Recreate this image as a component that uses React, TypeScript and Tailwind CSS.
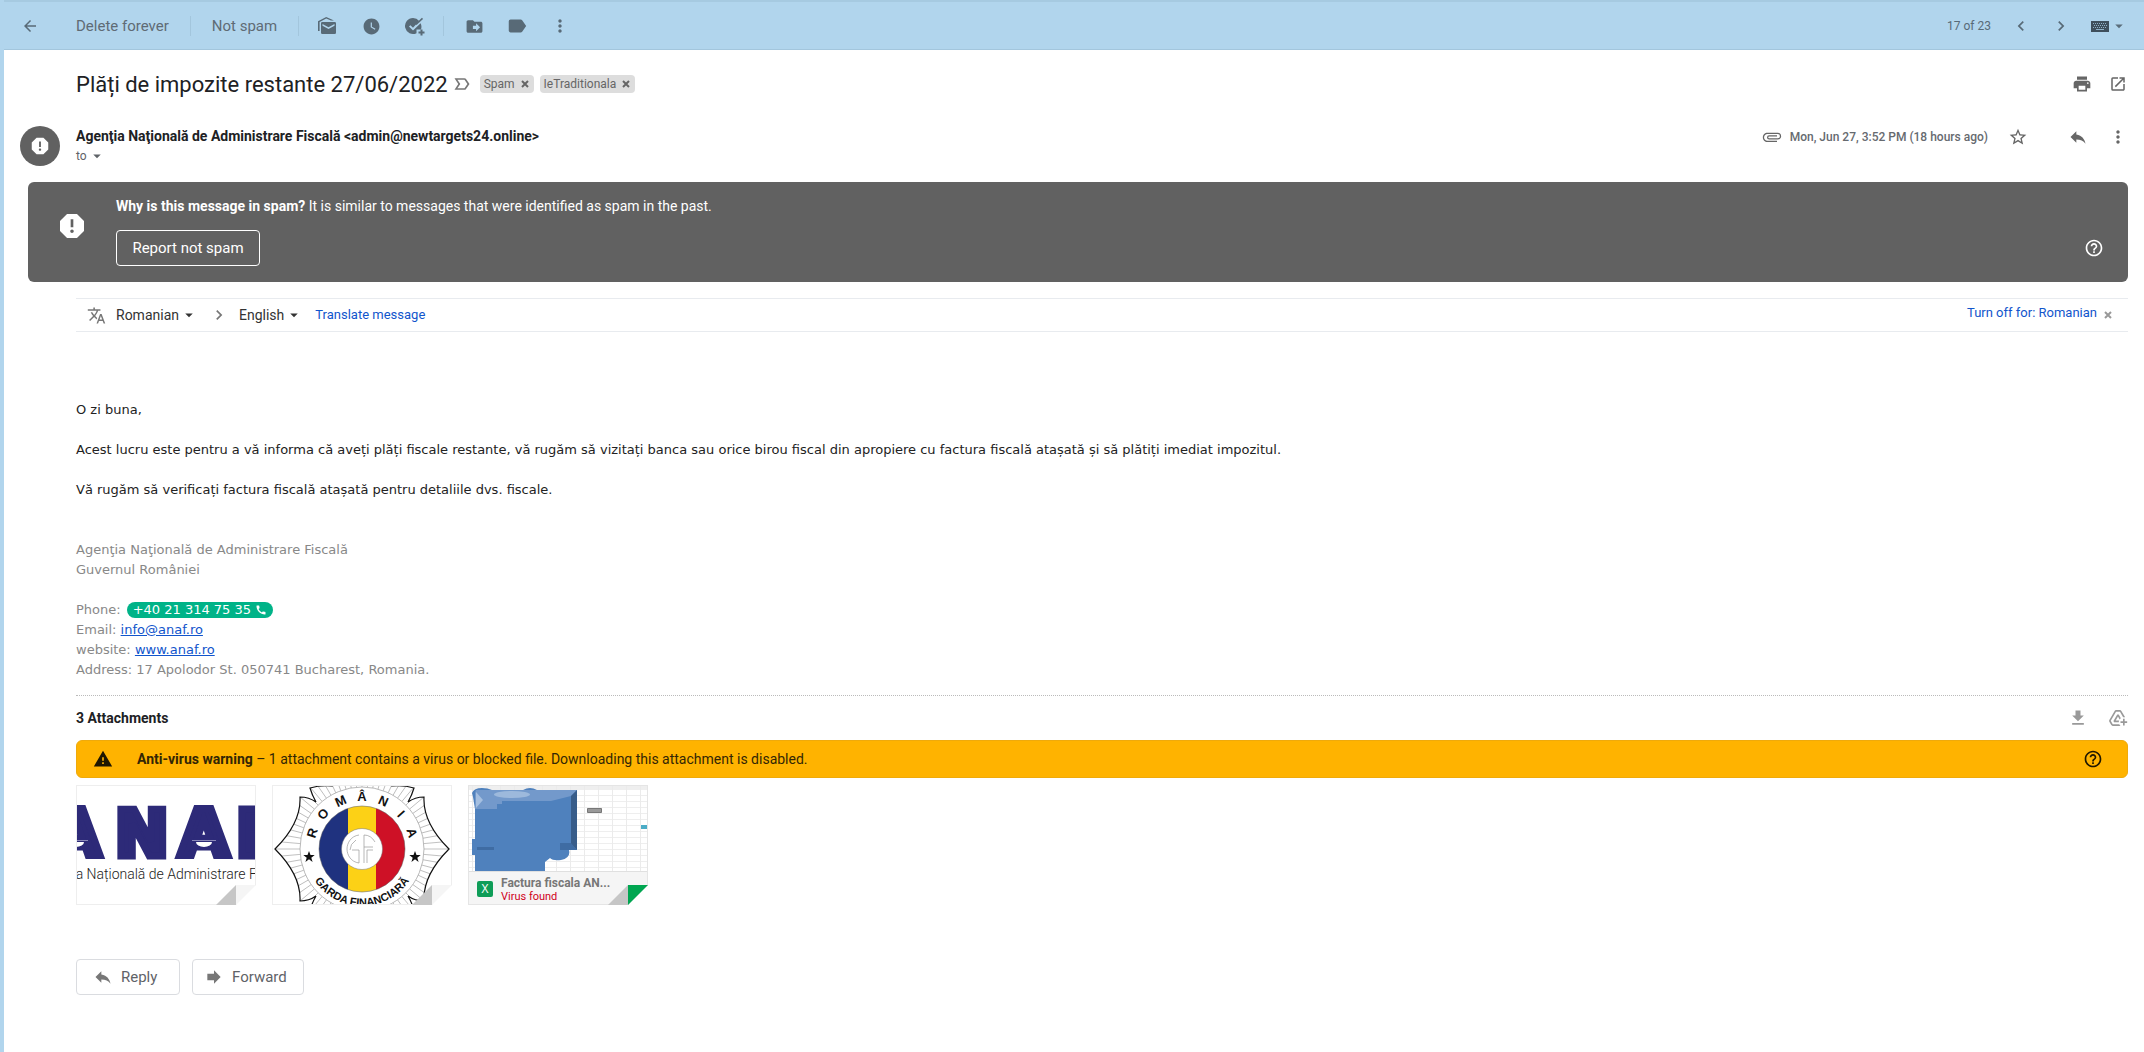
import type { ReactNode } from "react";
import {
  MdAddToDrive,
  MdArrowBack,
  MdArrowDropDown,
  MdAttachFile,
  MdCall,
  MdChevronLeft,
  MdChevronRight,
  MdDriveFileMove,
  MdFileDownload,
  MdForward,
  MdHelpOutline,
  MdLabel,
  MdLabelImportantOutline,
  MdMoreVert,
  MdOpenInNew,
  MdPrint,
  MdReply,
  MdReport,
  MdStarBorder,
  MdTranslate,
  MdWarning,
  MdWatchLater,
} from "react-icons/md";

function IconButton({ label, children }: { label: string; children: ReactNode }) {
  return (
    <button type="button" aria-label={label} className="flex size-5 shrink-0 items-center justify-center">
      {children}
    </button>
  );
}

function Divider() {
  return <span className="h-5 w-px bg-[#a3c6dd]" />;
}

function CrossIcon() {
  return (
    <svg viewBox="0 0 8 8" className="size-2" aria-hidden="true">
      <path stroke="currentColor" strokeWidth="2" d="M1 1 7 7M7 1 1 7" />
    </svg>
  );
}

function KeyboardIcon() {
  return (
    <svg viewBox="0 0 18 11" className="h-[11px] w-[18px]" aria-hidden="true">
      <path fill="currentColor" d="M0 0h18v11H0z" />
      <path stroke="#8fb0c6" strokeDasharray="1 1" d="M2 2.500h14M3 4.500h13M2 6.500h14" />
      <path stroke="#8fb0c6" d="M5 8.500h8" />
    </svg>
  );
}

function MarkUnreadIcon() {
  return (
    <svg viewBox="0 0 20 20" className="size-5" fill="currentColor" aria-hidden="true">
      <path d="M1 15V5.200L9.200 1 17 4.600H14L9.200 2.600 2.600 5.900V15z" />
      <path
        fillRule="evenodd"
        d="M5.300 6H17.700A1.300 1.300 0 0 1 19 7.300V16.700A1.300 1.300 0 0 1 17.700 18H5.300A1.300 1.300 0 0 1 4 16.700V7.300A1.300 1.300 0 0 1 5.300 6zM5.500 8V9.700L11.500 13 17.500 9.700V8L11.500 11.300z"
      />
    </svg>
  );
}

function AddTaskIcon() {
  return (
    <svg viewBox="0 0 22 22" className="size-[22px] shrink-0" aria-hidden="true">
      <path
        fill="currentColor"
        d="M9 3a8 8 0 1 0 3.500 15.200V14.500H17A8 8 0 0 0 16.600 8.300L9 15.600 5 11.600 6.400 10.200 9 12.700 15.200 6A8 8 0 0 0 9 3z"
      />
      <path stroke="currentColor" strokeWidth="1.600" fill="none" d="M12 9.500 18.500 3.400" />
      <path stroke="currentColor" strokeWidth="2" d="M17.500 14.500v6M14.500 17.500h6" />
    </svg>
  );
}

function Toolbar() {
  return (
    <header className="flex h-[50px] items-center border-b border-[#a3c6dd] bg-[#b1d5ed] pt-[3px] pr-4 text-[#586a77] shadow-[inset_0_2px_0_#a6cae1]">
      <div className="flex flex-1 items-center">
        <div className="flex w-[72px] pl-4">
          <IconButton label="Back to Spam">
            <MdArrowBack className="size-[18px]" />
          </IconButton>
        </div>
        <div className="flex items-center gap-[21px] text-[15px] text-[#5f6b75]">
          <button type="button">Delete forever</button>
          <Divider />
          <button type="button">Not spam</button>
          <Divider />
        </div>
        <div className="flex items-center gap-6 pl-[18px]">
          <IconButton label="Mark as unread">
            <MarkUnreadIcon />
          </IconButton>
          <IconButton label="Snooze">
            <MdWatchLater className="size-[19px]" />
          </IconButton>
          <IconButton label="Add to Tasks">
            <AddTaskIcon />
          </IconButton>
        </div>
        <div className="flex items-center pl-[18px]">
          <Divider />
        </div>
        <div className="flex items-center gap-[23px] pl-5">
          <IconButton label="Move to">
            <MdDriveFileMove className="size-[19px]" />
          </IconButton>
          <IconButton label="Labels">
            <MdLabel className="size-[22px] shrink-0" />
          </IconButton>
          <IconButton label="More">
            <MdMoreVert className="size-5" />
          </IconButton>
        </div>
      </div>
      <div className="flex items-center gap-5">
        <span className="text-xs">17 of 23</span>
        <IconButton label="Newer">
          <MdChevronLeft className="size-5" />
        </IconButton>
        <IconButton label="Older">
          <MdChevronRight className="size-5" />
        </IconButton>
        <button type="button" aria-label="Input tools" className="flex items-center gap-px text-[#3f4f5c]">
          <KeyboardIcon />
          <MdArrowDropDown className="size-[18px] text-[#5a6d7b]" />
        </button>
      </div>
    </header>
  );
}

function LabelChip({ name }: { name: string }) {
  return (
    <span className="flex h-[18px] items-center gap-1.5 rounded bg-[#ddd] pr-[5px] pl-1 text-xs text-[#666]">
      {name}
      <button type="button" aria-label={`Remove label ${name}`}>
        <CrossIcon />
      </button>
    </span>
  );
}

function SubjectRow() {
  return (
    <div className="flex h-[68px] items-center pr-4 pl-[72px]">
      <div className="flex flex-1 items-center">
        <h1 className="text-[22px] text-[#202124]">Plăți de impozite restante 27/06/2022</h1>
        <button type="button" aria-label="Mark as important" className="pr-2 pl-1 text-[#777]">
          <MdLabelImportantOutline className="size-5" />
        </button>
        <div className="flex items-center gap-1.5">
          <LabelChip name="Spam" />
          <LabelChip name="IeTraditionala" />
        </div>
      </div>
      <div className="flex items-center gap-4 text-[#666]">
        <IconButton label="Print all">
          <MdPrint className="size-5" />
        </IconButton>
        <IconButton label="In new window">
          <MdOpenInNew className="size-[18px]" />
        </IconButton>
      </div>
    </div>
  );
}

function SenderRow() {
  return (
    <div className="flex pt-2 pr-4 pl-4">
      <div className="flex size-10 items-center justify-center rounded-full bg-[#616161] text-white">
        <MdReport className="size-[22px]" />
      </div>
      <div className="flex-1 pl-4">
        <p className="text-sm font-bold text-[#202124]">
          Agenţia Naţională de Administrare Fiscală &lt;admin@newtargets24.online&gt;
        </p>
        <button type="button" className="flex items-center text-xs leading-5 text-[#5f6368]">
          to
          <MdArrowDropDown className="ml-px size-[18px]" />
        </button>
      </div>
      <div className="flex h-[22px] items-center text-[#666]">
        <MdAttachFile className="size-5 rotate-90" />
        <span className="pl-2 text-xs font-medium text-[#666a6f]">Mon, Jun 27, 3:52 PM (18 hours ago)</span>
        <div className="flex items-center pl-5">
          <IconButton label="Not starred">
            <MdStarBorder className="size-5" />
          </IconButton>
        </div>
        <div className="flex items-center gap-5 pl-10">
          <IconButton label="Reply">
            <MdReply className="size-5" />
          </IconButton>
          <IconButton label="More">
            <MdMoreVert className="size-5" />
          </IconButton>
        </div>
      </div>
    </div>
  );
}

function SpamBanner() {
  return (
    <section className="mt-4 mr-4 ml-6 flex h-[100px] rounded-md bg-[#616161] text-white">
      <div className="w-[88px] pt-7 pl-7">
        <MdReport className="size-8" />
      </div>
      <div className="flex-1 pt-3.5">
        <p className="text-sm">
          <b>Why is this message in spam?</b> It is similar to messages that were identified as spam in the past.
        </p>
        <button type="button" className="mt-3.5 h-9 w-36 rounded border border-white text-[15px]">
          Report not spam
        </button>
      </div>
      <div className="pt-14 pr-6">
        <IconButton label="Help">
          <MdHelpOutline className="size-5" />
        </IconButton>
      </div>
    </section>
  );
}

function LanguagePicker({ value, label }: { value: string; label: string }) {
  return (
    <button type="button" aria-label={label} className="flex items-center gap-px text-sm text-[#333]">
      {value}
      <MdArrowDropDown className="size-[18px]" />
    </button>
  );
}

function TranslateBar() {
  return (
    <section className="mt-4 mr-4 ml-[72px] flex h-[34px] items-center border-y border-[#e8ebef]">
      <div className="flex flex-1 items-center">
        <div className="w-10 pl-[11px] text-[#777]">
          <MdTranslate className="size-[19px]" />
        </div>
        <LanguagePicker value="Romanian" label="Source language" />
        <MdChevronRight className="mr-2.5 ml-[11px] size-5 text-[#777]" />
        <LanguagePicker value="English" label="Target language" />
        <a href="#translate" className="ml-3 text-[13px] text-[#1155cc]">
          Translate message
        </a>
      </div>
      <div className="flex items-center pr-4">
        <a href="#turn-off" className="pb-1 text-[13px] text-[#1155cc]">
          Turn off for: Romanian
        </a>
        <button type="button" aria-label="Close" className="ml-[7px] text-[#999]">
          <CrossIcon />
        </button>
      </div>
    </section>
  );
}

function MessageBody() {
  return (
    <article className="mt-[68px] mr-4 ml-[72px] font-['DejaVu_Sans',Verdana,sans-serif] text-[13px] leading-5 text-[#222]">
      <p>O zi buna,</p>
      <p className="mt-5">
        Acest lucru este pentru a vă informa că aveți plăți fiscale restante, vă rugăm să vizitați banca sau orice birou
        fiscal din apropiere cu factura fiscală atașată și să plătiți imediat impozitul.
      </p>
      <p className="mt-5">Vă rugăm să verificați factura fiscală atașată pentru detaliile dvs. fiscale.</p>
      <div className="mt-10 text-[#888]">
        <p>Agenţia Naţională de Administrare Fiscală</p>
        <p>Guvernul României</p>
        <p className="mt-5 flex items-center">
          Phone:
          <a
            href="tel:+40213147535"
            className="ml-1.5 flex h-4 items-center gap-1 rounded-full bg-[#00b388] px-1.5 text-white"
          >
            +40 21 314 75 35
            <MdCall className="size-3" />
          </a>
        </p>
        <p>
          Email:{" "}
          <a href="mailto:info@anaf.ro" className="text-[#1155cc] underline">
            info@anaf.ro
          </a>
        </p>
        <p>
          website:{" "}
          <a href="#anaf" className="text-[#1155cc] underline">
            www.anaf.ro
          </a>
        </p>
        <p>Address: 17 Apolodor St. 050741 Bucharest, Romania.</p>
      </div>
    </article>
  );
}

function Fold({ corner }: { corner: string }) {
  return (
    <svg viewBox="0 0 40 20" className="absolute right-0 bottom-0 h-5 w-10" aria-hidden="true">
      <path fill="#fff" d="M40 0V20H20z" />
      <path fill="#c6c6c6" d="M0 20 20 0V20z" />
      <path fill={corner} d="M20 20V0H40z" />
    </svg>
  );
}

function AnafThumb() {
  return (
    <svg viewBox="0 0 180 120" className="h-[120px] w-[180px]" role="img" aria-label="ANAF logo">
      <text
        x="-25 39 103 160"
        y="71"
        fontFamily="DejaVu Sans"
        fontWeight="700"
        fontSize="64"
        fill="#2d2a78"
        stroke="#2d2a78"
        strokeWidth="7"
      >
        ANAF
      </text>
      <path fill="#fff" d="M120 57h16a8 5 0 0 1-16 0zM-8 57h16a8 5 0 0 1-16 0z" />
      <path stroke="#8a88b8" d="M116 55.500h24M-10 55.500h22" />
      <text x="-8" y="94" fontFamily="Roboto" fontWeight="300" fontSize="14" fill="#222">
        ția Națională de Administrare F
      </text>
    </svg>
  );
}

const topLetters = ["R", "O", "M", "Â", "N", "I", "A"];
const rays = Array.from({ length: 72 }, (_, i) => i * 5);
const STAR = "M0-6 1.500-1.900H5.700L2.300.700 3.600 4.900 0 2.300-3.600 4.900-2.300.700-5.700-1.900H-1.500z";
const BURST =
  "M3 64C18 49 29 32 28 12Q37 12 44 17 40 10 38 3 48 0 60 1L64-6H116L120 1Q132 0 142 3 140 10 136 17 143 12 152 12C151 32 162 49 177 64C162 79 151 96 152 116Q143 116 136 111 140 118 142 125L90 140 38 125Q40 118 44 111 37 116 28 116C29 96 18 79 3 64z";

function GuardThumb() {
  return (
    <svg viewBox="0 0 180 120" className="h-[120px] w-[180px]" role="img" aria-label="Garda Financiară emblem">
      <defs>
        <clipPath id="burst">
          <path d={BURST} />
        </clipPath>
        <clipPath id="disc">
          <circle cx="90" cy="64" r="43" />
        </clipPath>
        <path id="lower-arc" d="M33 64a57 57 0 0 0 114 0" />
      </defs>
      <g clipPath="url(#burst)" stroke="#aaa" strokeWidth="0.700">
        {rays.map((a) => (
          <path key={a} d="M90 2V-40" transform={`rotate(${a} 90 64)`} />
        ))}
      </g>
      <path d={BURST} fill="none" stroke="#111" strokeWidth="1.200" />
      <circle cx="90" cy="64" r="62" fill="#fff" stroke="#999" strokeWidth="0.700" />
      <g clipPath="url(#disc)">
        <path fill="#1f327f" d="M46 20H76V108H46z" />
        <path fill="#fcd116" d="M76 20h28v88H76z" />
        <path fill="#ce1126" d="M104 20h30v88h-30z" />
      </g>
      <circle cx="90" cy="64" r="43" fill="none" stroke="#555" strokeWidth="0.500" />
      <circle cx="90" cy="64" r="20.500" fill="#fff" stroke="#777" strokeWidth="0.500" />
      <path
        fill="none"
        stroke="#999"
        strokeWidth="0.700"
        d="M87 50C79 51 75 58 75 64S79 77 87 78V65H80M84 55Q78 59 78 65M92 78V50Q99 50 103 57M95 78V65H101M92 62H101"
      />
      <g fontFamily="Liberation Sans" fontWeight="700" fontSize="13" fill="#111" textAnchor="middle">
        {topLetters.map((l, i) => (
          <text key={i} x="90" y="16" transform={`rotate(${(i - 3) * 24} 90 64)`}>
            {l}
          </text>
        ))}
        <text fontSize="11">
          <textPath href="#lower-arc" startOffset="50%">
            GARDA FINANCIARĂ
          </textPath>
        </text>
      </g>
      <path d={STAR} fill="#111" transform="translate(37 72)" />
      <path d={STAR} fill="#111" transform="translate(143 72)" />
    </svg>
  );
}

const gridRows = Array.from({ length: 14 }, (_, i) => 10 + i * 6);
const gridCols = Array.from({ length: 13 }, (_, i) => 4 + i * 14);

function SheetThumb() {
  return (
    <svg viewBox="0 0 180 86" className="h-[86px] w-[180px]" role="img" aria-label="Spreadsheet preview">
      <path fill="#efefef" d="M0 0h180v5H0z" />
      {gridRows.map((y) => (
        <path key={y} stroke="#eee" d={`M0 ${y}.500H180`} />
      ))}
      {gridCols.map((x) => (
        <path key={x} stroke="#ebebeb" d={`M${x}.500 0V86`} />
      ))}
      <path
        fill="#4f81bd"
        d="M4 8Q6 3 14 3 20 3 24 5H55Q62 1 69 5H109V65H101Q103 73 93 75 85 76 82 73L77 77V86H7V70H4V54H7V24L5 12z"
      />
      <path fill="#7399cb" d="M8 5H109L103 11 83 16H34V19H29V24H7V8z" />
      <path fill="#a5bfe0" d="M8 7 15 15 8 23z" />
      <ellipse cx="44" cy="9.500" rx="18" ry="3.500" fill="#9db9dc" />
      <path fill="#385d8a" d="M109 5V65L103 59V11z" />
      <path fill="#3f6ca3" d="M92 58h11l6 7H92zM9 62h17v3H9z" />
      <path fill="#999" stroke="#777" d="M119.500 23.500h14v4h-14z" />
      <path fill="#4bacc6" d="M173 40h6v4h-6z" />
    </svg>
  );
}

function Attachments() {
  return (
    <section className="mt-[15px] mr-4 ml-[72px] border-t border-dotted border-[#bbb]">
      <div className="flex h-11 items-center">
        <h2 className="flex-1 text-sm font-bold text-[#202124]">3 Attachments</h2>
        <div className="flex items-center gap-5 text-[#999]">
          <IconButton label="Download all attachments">
            <MdFileDownload className="size-5" />
          </IconButton>
          <IconButton label="Add all to Drive">
            <MdAddToDrive className="size-5" />
          </IconButton>
        </div>
      </div>
      <div className="flex h-[38px] items-center rounded-md border border-[#efaa0b] bg-[#ffb300] text-sm text-[#332605]">
        <div className="w-[60px] pl-4 text-[#1f1700]">
          <MdWarning className="size-5" />
        </div>
        <p className="flex-1">
          <b>Anti-virus warning</b> – 1 attachment contains a virus or blocked file. Downloading this attachment is
          disabled.
        </p>
        <div className="pr-6 text-[#1f1700]">
          <IconButton label="Help">
            <MdHelpOutline className="size-5" />
          </IconButton>
        </div>
      </div>
      <div className="mt-[7px] flex gap-4">
        <a href="#attachment-1" className="relative h-[120px] w-[180px] overflow-hidden outline -outline-offset-1 outline-[#eee]">
          <AnafThumb />
          <Fold corner="#f5f5f5" />
        </a>
        <a href="#attachment-2" className="relative h-[120px] w-[180px] overflow-hidden outline -outline-offset-1 outline-[#eee]">
          <GuardThumb />
          <Fold corner="#f5f5f5" />
        </a>
        <a
          href="#attachment-3"
          className="relative flex h-[120px] w-[180px] flex-col overflow-hidden outline -outline-offset-1 outline-[#e5e5e5]"
        >
          <SheetThumb />
          <div className="flex flex-1 items-center gap-2 border-t border-[#e0e0e0] bg-[#f5f5f5] pl-[9px]">
            <span className="flex size-4 items-center justify-center rounded-xs bg-[#0f9d58] font-['Open_Sans',sans-serif] text-xs text-white">
              X
            </span>
            <div>
              <p className="text-xs leading-4 font-bold text-[#777]">Factura fiscala AN...</p>
              <p className="text-[11px] leading-3 text-[#d0021b]">Virus found</p>
            </div>
          </div>
          <Fold corner="#00a651" />
        </a>
      </div>
    </section>
  );
}

function Actions() {
  const button = "flex h-9 items-center gap-2 rounded border border-[#dadce0] px-4 text-[15px] text-[#5f6368]";
  return (
    <div className="mt-[54px] ml-[72px] flex gap-3 pb-14">
      <button type="button" className={`${button} w-[104px]`}>
        <MdReply className="size-5 text-[#777]" />
        Reply
      </button>
      <button type="button" className={`${button} w-28 pl-[11px]`}>
        <MdForward className="size-5 text-[#777]" />
        Forward
      </button>
    </div>
  );
}

export default function App() {
  return (
    <div className="min-h-screen border-l-4 border-[#b1d5ed] bg-white font-[Roboto,Arial,sans-serif]">
      <Toolbar />
      <main>
        <SubjectRow />
        <SenderRow />
        <SpamBanner />
        <TranslateBar />
        <MessageBody />
        <Attachments />
        <Actions />
      </main>
    </div>
  );
}
